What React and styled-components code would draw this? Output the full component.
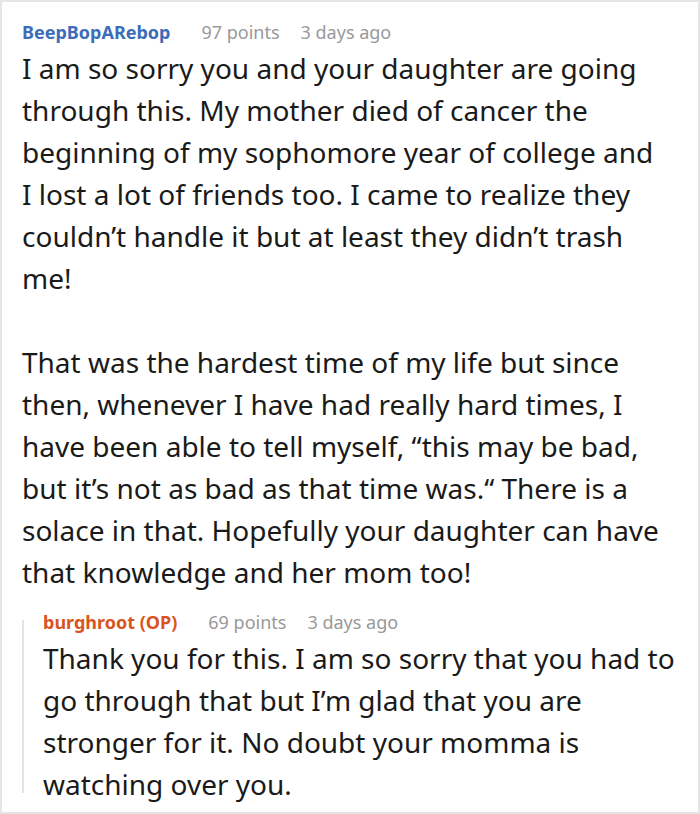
import React from 'react'
import styled, { createGlobalStyle } from 'styled-components'

const GlobalStyle = createGlobalStyle`
  html, body {
    margin: 0;
    padding: 0;
    background: #ffffff;
  }
  body {
    font-family: "Noto Sans", "Open Sans", sans-serif;
  }
`

const Frame = styled.div`
  box-sizing: border-box;
  width: 700px;
  height: 814px;
  border: 2px solid #e6e6e6;
  padding: 17px 14px 0 20px;
  overflow: hidden;
`

const Comment = styled.div`
  display: flex;
  flex-direction: column;
  flex: 1;
  min-width: 0;
`

const Reply = styled.div`
  display: flex;
  margin-top: 16px;
`

const Rail = styled.div`
  width: 2px;
  flex-shrink: 0;
  margin: 11px 19px 12px 0;
  background: #e4e4e4;
`

const Meta = styled.div`
  display: flex;
  align-items: baseline;
  font-size: 18px;
  line-height: 26px;
`

const Author = styled.span`
  font-weight: 700;
  margin-right: 31px;
  color: ${p => (p.$op ? '#d9541e' : '#3d6cb9')};
`

const Faint = styled.span`
  color: #999999;
  margin-right: 21px;
`

const Body = styled.div`
  margin-top: 2px;
  padding-right: ${p => (p.$nested ? '0' : '20px')};
  font-size: 28px;
  line-height: 42px;
  color: #1a1a1a;

  p {
    margin: 0;
  }
  p + p {
    margin-top: 42px;
  }
`

function CommentBlock({ author, points, time, op, nested, children }) {
  return (
    <Comment>
      <Meta>
        <Author $op={op}>{author}</Author>
        <Faint>{points} points</Faint>
        <Faint>{time}</Faint>
      </Meta>
      <Body $nested={nested}>{children}</Body>
    </Comment>
  )
}

export default function App() {
  return (
    <>
      <GlobalStyle />
      <Frame>
        <CommentBlock author="BeepBopARebop" points={97} time="3 days ago">
          <p>
            I am so sorry you and your daughter are going through this. My mother died of cancer the
            beginning of my sophomore year of college and I lost a lot of friends too. I came to
            realize they couldn’t handle it but at least they didn’t trash me!
          </p>
          <p>
            That was the hardest time of my life but since then, whenever I have had really hard
            times, I have been able to tell myself, “this may be bad, but it’s not as bad as that
            time was.“ There is a solace in that. Hopefully your daughter can have that knowledge
            and her mom too!
          </p>
        </CommentBlock>
        <Reply>
          <Rail />
          <CommentBlock author="burghroot (OP)" points={69} time="3 days ago" op nested>
            <p>
              Thank you for this. I am so sorry that you had to go through that but I’m glad that
              you are stronger for it. No doubt your momma is watching over you.
            </p>
          </CommentBlock>
        </Reply>
      </Frame>
    </>
  )
}
